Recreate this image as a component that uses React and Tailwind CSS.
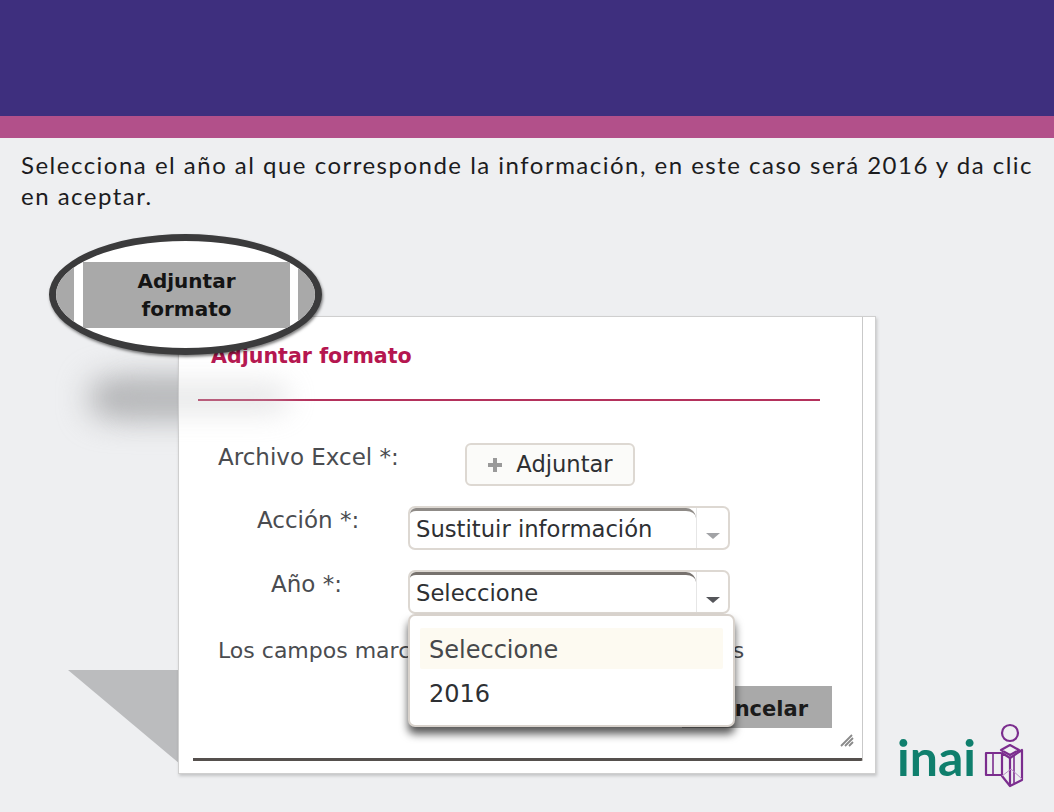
import React from "react";

const verdana = "[font-family:'DejaVu_Sans',sans-serif]";

function InaiMark() {
  return (
    <svg width="42" height="66" viewBox="0 0 42 66" fill="none" stroke="#7b2d8e" strokeWidth="2.2" strokeLinejoin="round">
      <circle cx="26" cy="11" r="8" />
      <path d="M26 23 L35 28 L26 33 L17 28 Z" />
      <path d="M17 31 H2 V53 H17" />
      <path d="M9 31 V53" strokeWidth="1.6" />
      <path d="M18 31 L26 36 L38 28 V58 L26 64 L18 54 Z" />
      <path d="M26 36 V64" />
      <path d="M30 34 V61" strokeWidth="1.6" />
      <path d="M18 54 L27 47 L38 57" strokeWidth="1" stroke="#b98cc6" />
    </svg>
  );
}

function SelectBox({ label, dark }) {
  return (
    <div className="flex h-[44px] w-[322px] rounded-[7px] border-2 border-[#ddd8d2] bg-white">
      <div className={`flex flex-1 items-center rounded-tl-[6px] rounded-tr-[10px] border-t-[3px] pl-[6px] text-[22.7px] text-[#2e3033] ${dark ? "border-[#77726e]" : "border-[#8f8b87]"}`}>
        {label}
      </div>
      <div className="flex w-[32px] items-end justify-center border-l border-[#e6e6e6] pb-[9px]">
        <span className={`h-0 w-0 border-x-[7px] border-t-[6px] border-x-transparent ${dark ? "border-t-[#55565a]" : "border-t-[#a2a3a6]"}`} />
      </div>
    </div>
  );
}

export default function App() {
  return (
    <div className="relative flex h-[812px] w-[1054px] flex-col overflow-hidden bg-[#eeeff1]">
      <div className="h-[116px] shrink-0 bg-[#3e2f7e]" />
      <div className="h-[22px] shrink-0 bg-[#b2508a]" />
      <p className="ml-[21px] mt-[11px] w-[1020px] text-[24px] leading-[31px] tracking-[1.49px] text-[#1c1c1e] [font-family:Lato,sans-serif]">
        Selecciona el año al que corresponde la información, en este caso será 2016 y da clic
        <br />
        en aceptar.
      </p>

      {/* sombras de la diapositiva, detras del dialogo */}
      <div className="absolute left-[68px] top-[670px] h-[94px] w-[112px] bg-[#bbbcbe] [clip-path:polygon(0_0,100%_0,100%_100%)]" />
      <div className="absolute left-[90px] top-[380px] h-[36px] w-[195px] rounded-full bg-[#a8a9ab] blur-[16px]" />

      <div className="relative mt-[105px] flex flex-1 items-start pl-[178px]">
        <div className={`relative h-[458px] w-[698px] border border-[#cfcfcf] bg-white pl-[14px] shadow-[1px_2px_3px_rgba(0,0,0,0.18)] ${verdana}`}>
          <div className="h-[444px] w-[670px] rounded-br-[2px] border-r border-b-[3px] border-r-[#c9c9c9] border-b-[#55504d]">
            <h2 className="pl-[18px] pt-[26px] text-[20.6px] font-bold leading-[27px] text-[#b5164f]">Adjuntar formato</h2>
            <div className="ml-[5px] mt-[29px] h-[2px] w-[622px] bg-[#b4325c]" />

            <div className="mt-[42px] flex items-start">
              <span className="ml-[25px] w-[247px] text-[23px] leading-[28px] text-[#4a4c50]">Archivo Excel *:</span>
              <button className="flex h-[43px] w-[170px] items-center justify-center gap-[13px] rounded-[6px] border-2 border-[#ddd8d2] bg-[#fbfbf9] text-[22.6px] text-[#2e3033]">
                <svg width="16" height="16" viewBox="0 0 16 16" fill="#9a9a9a">
                  <path d="M6 1h4v5h5v4h-5v5H6v-5H1V6h5z" />
                </svg>
                Adjuntar
              </button>
            </div>

            <div className="mt-[20px] flex items-start">
              <span className="ml-[64px] w-[151px] text-[23px] leading-[28px] text-[#4a4c50]">Acción *:</span>
              <SelectBox label="Sustituir información" />
            </div>

            <div className="mt-[20px] flex items-start">
              <span className="ml-[78px] w-[137px] text-[23px] leading-[28px] text-[#4a4c50]">Año *:</span>
              <SelectBox label="Seleccione" dark />
            </div>

            <p className="ml-[25px] mt-[23px] whitespace-nowrap text-[22px] leading-[28px] text-[#4a4c50]">
              Los campos marcados con un * son obligatorios
            </p>

            <div className="mt-[21px] flex justify-end pr-[30px]">
              <button className="flex h-[42px] w-[150px] items-center justify-end bg-[#a9a9a9] pr-[24px] pt-[5px] text-[21px] font-bold text-[#1b1b1b]">
                Cancelar
              </button>
            </div>

            <svg className="absolute bottom-[26px] right-[21px]" width="14" height="13" viewBox="0 0 14 13" stroke="#8a8a8a" strokeWidth="1.8">
              <path d="M1 12 L12 1 M5 12 L13 4 M9 12 L13 8" />
            </svg>
          </div>

          {/* lista abierta del select de año */}
          <div className="absolute left-[229px] top-[297px] h-[113px] w-[327px] rounded-[7px] border-2 border-[#d8d2cc] bg-white px-[10px] pt-[12px] shadow-[0_7px_8px_rgba(0,0,0,0.65)]">
            <div className="flex h-[41px] items-center rounded-[2px] bg-[#fdfaf1] pl-[9px] pt-[2px] text-[24px] text-[#46484b]">Seleccione</div>
            <div className="flex h-[47px] items-center pl-[9px] pt-[2px] text-[24px] text-[#2e3033]">2016</div>
          </div>

          {/* resto de la sombra que cae sobre el dialogo */}
          <div className="absolute left-[-60px] top-[66px] h-[30px] w-[170px] rounded-full bg-[#c4c5c7] opacity-40 blur-[14px]" />
        </div>

        <div className="ml-[21px] mt-[413px] flex items-start">
          <span className="text-[50px] font-bold leading-[56px] text-[#0f7f6d] [font-family:Lato,sans-serif]">inai</span>
          <div className="-mt-[7px] ml-[8px]"><InaiMark /></div>
        </div>
      </div>

      {/* lupa sobre el boton Adjuntar formato */}
      <div className="absolute left-[49px] top-[234px] flex h-[121px] w-[273px] items-center overflow-hidden rounded-[50%] border-[7px] border-[#3b3b3c] bg-white shadow-[1px_2px_3px_rgba(0,0,0,0.5)]">
        <div className="h-[66px] w-[18px] bg-[#a9a9a9]" />
        <div className="ml-[9px] flex h-[66px] w-[207px] flex-col items-center justify-center bg-[#a9a9a9] text-[20px] font-bold leading-[28px] text-[#141414] [font-family:'DejaVu_Sans',sans-serif]">
          <span>Adjuntar</span>
          <span>formato</span>
        </div>
        <div className="ml-[8px] h-[66px] flex-1 bg-[#a9a9a9]" />
      </div>
    </div>
  );
}
